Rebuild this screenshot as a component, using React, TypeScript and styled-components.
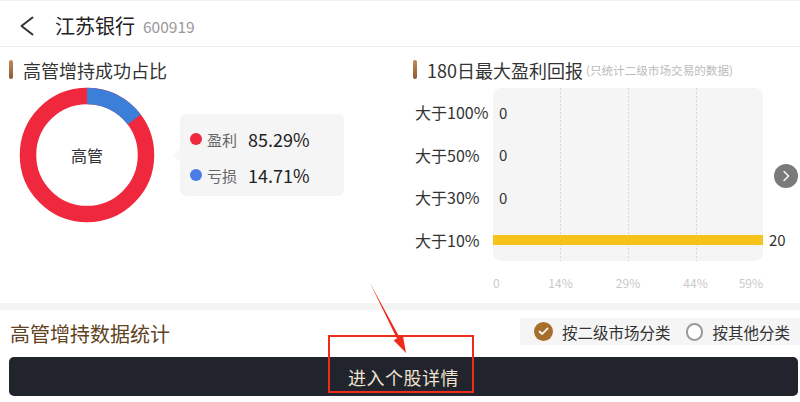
import React from "react";
import styled, { createGlobalStyle } from "styled-components";

const GlobalStyle = createGlobalStyle`
  html, body {
    margin: 0;
    padding: 0;
    background: #fff;
  }
  body {
    font-family: "Noto Sans CJK SC", "Noto Sans", sans-serif;
    color: #333;
  }
  * {
    box-sizing: border-box;
  }
`;

const Page = styled.div`
  position: relative;
  width: 800px;
  height: 402px;
  overflow: hidden;
  background: #fff;
`;

const Header = styled.header`
  height: 47px;
  display: flex;
  align-items: center;
  padding: 5px 0 0 20px;
  border-top: 1px solid #f2f2f2;
  border-bottom: 1px solid #ececec;
`;

const StockName = styled.span`
  margin-left: 21px;
  font-size: 20px;
  line-height: 24px;
  color: #222;
`;

const StockCode = styled.span`
  margin-left: 8px;
  font-size: 15.5px;
  line-height: 24px;
  color: #999;
`;

const Panels = styled.div`
  display: grid;
  grid-template-columns: 400px 400px;
  height: 256px;
`;

const Panel = styled.section<{ $left: number; $right?: number }>`
  padding: 13px ${(p) => p.$right ?? 0}px 0 ${(p) => p.$left}px;
`;

const TitleRow = styled.div`
  display: flex;
  align-items: center;
  height: 19px;
  gap: 10px;
`;

const TitleBar = styled.span`
  width: 4px;
  height: 19px;
  border-radius: 2px;
  background: linear-gradient(180deg, #c08a5c 0%, #8c5a36 100%);
`;

const Title = styled.h2`
  margin: 0;
  font-size: 18px;
  font-weight: 400;
  line-height: 22px;
  color: #333;
  white-space: nowrap;
`;

const Note = styled.span`
  margin-left: -7px;
  font-size: 11.6px;
  color: #bbb;
  white-space: nowrap;
`;

const DonutRow = styled.div`
  display: flex;
  align-items: center;
  margin-top: 8px;
  padding-left: 10px;
`;

const DonutBox = styled.div`
  position: relative;
  width: 136px;
  height: 136px;
  display: flex;
  align-items: center;
  justify-content: center;
  & svg {
    position: absolute;
    inset: 0;
  }
`;

const DonutLabel = styled.span`
  position: relative;
  font-size: 16px;
  color: #333;
`;

const Legend = styled.div`
  position: relative;
  margin-left: 25px;
  width: 164px;
  height: 82px;
  padding: 7px 0 3px 10px;
  border-radius: 6px;
  background: #f5f5f5;
  &::before {
    content: "";
    position: absolute;
    left: -7px;
    top: 34px;
    border-style: solid;
    border-width: 7px 7px 7px 0;
    border-color: transparent #f7f7f7 transparent transparent;
  }
`;

const LegendRow = styled.div`
  display: flex;
  align-items: center;
  height: 36px;
`;

const Dot = styled.span<{ $color: string }>`
  width: 12px;
  height: 12px;
  border-radius: 50%;
  background: ${(p) => p.$color};
  margin-right: 5px;
`;

const LegendName = styled.span`
  font-size: 15px;
  color: #666;
  margin-right: 11px;
`;

const LegendValue = styled.span`
  font-size: 18px;
  color: #222;
`;

const Chart = styled.div`
  display: grid;
  grid-template-columns: 78px 270px 1fr;
  grid-template-rows: 3px repeat(4, 42.5px);
  margin-top: 9px;
  margin-left: 2px;
`;

const PlotBg = styled.div`
  grid-column: 2;
  grid-row: 1 / -1;
  border-radius: 8px;
  background: #f5f5f5;
  overflow: hidden;
`;

const RowLabel = styled.span<{ $row: number }>`
  grid-column: 1;
  grid-row: ${(p) => p.$row};
  align-self: center;
  font-size: 16px;
  color: #333;
  white-space: nowrap;
`;

const BarRow = styled.div<{ $row: number; $empty: boolean }>`
  grid-column: 2 / 4;
  grid-row: ${(p) => p.$row};
  display: flex;
  align-items: center;
  gap: 6px;
  padding-left: ${(p) => (p.$empty ? 6 : 0)}px;
`;

const Bar = styled.span`
  height: 10px;
  background: #f7c31a;
`;

const BarValue = styled.span`
  font-size: 15px;
  color: #333;
`;

const NextButton = styled.span`
  grid-column: 3;
  grid-row: 1 / -1;
  justify-self: end;
  align-self: center;
  margin-top: 3px;
  width: 24px;
  height: 24px;
  border-radius: 50%;
  background: #7a7a7a;
  display: flex;
  align-items: center;
  justify-content: center;
`;

const Axis = styled.div`
  display: flex;
  justify-content: space-between;
  width: 270px;
  margin: 14px 0 0 80px;
  height: 16px;
`;

const Tick = styled.span<{ $align: string }>`
  width: 0;
  display: flex;
  justify-content: ${(p) => p.$align};
  font-size: 12px;
  line-height: 16px;
  color: #c9c9c9;
  white-space: nowrap;
`;

const Divider = styled.div`
  height: 7px;
  background: #f4f4f4;
`;

const Bottom = styled.section`
  padding-top: 8px;
`;

const StatsHeader = styled.div`
  display: flex;
  justify-content: space-between;
  align-items: flex-end;
  height: 27px;
`;

const StatsTitle = styled.h3`
  margin: 0 0 0 10px;
  font-size: 20px;
  font-weight: 400;
  line-height: 22px;
  color: #5f4322;
`;

const RadioGroup = styled.div`
  display: flex;
  align-items: center;
  width: 280px;
  height: 27px;
  padding: 0 10px 0 14px;
  background: #f5f5f5;
`;

const RadioText = styled.span`
  margin-left: 9px;
  font-size: 15.5px;
  color: #333;
  white-space: nowrap;
`;

const CheckedCircle = styled.span`
  width: 19px;
  height: 19px;
  border-radius: 50%;
  background: #a86f2c;
  display: flex;
  align-items: center;
  justify-content: center;
`;

const EmptyCircle = styled.span`
  margin-left: 15px;
  width: 18px;
  height: 18px;
  border-radius: 50%;
  border: 2px solid #9a9a9a;
  background: #fff;
`;

const DetailButton = styled.div`
  margin: 12px 2px 0 9px;
  height: 39px;
  border-radius: 5px;
  background: #21242c;
  display: flex;
  align-items: center;
  justify-content: center;
  font-size: 18px;
  color: #efe2d0;
  letter-spacing: 0.5px;
`;

const Annotation = styled.svg`
  position: absolute;
  left: 0;
  top: 0;
  pointer-events: none;
`;

const rows = [
  { label: "大于100%", value: 0 },
  { label: "大于50%", value: 0 },
  { label: "大于30%", value: 0 },
  { label: "大于10%", value: 20 },
];

const ticks = ["0", "14%", "29%", "44%", "59%"];

const R = 59;
const C = 2 * Math.PI * R;
const lossShare = 0.1471;

export default function App() {
  const max = 20;
  return (
    <Page>
      <GlobalStyle />
      <Header>
        <svg width="14" height="20" viewBox="0 0 14 20">
          <polyline points="12.5,1.5 1.5,10 12.5,18.5" fill="none" stroke="#333" strokeWidth="2" strokeLinecap="round" strokeLinejoin="round" />
        </svg>
        <StockName>江苏银行</StockName>
        <StockCode>600919</StockCode>
      </Header>

      <Panels>
        <Panel $left={9}>
          <TitleRow>
            <TitleBar />
            <Title>高管增持成功占比</Title>
          </TitleRow>
          <DonutRow>
            <DonutBox>
              <svg width="136" height="136" viewBox="0 0 136 136">
                <circle cx="68" cy="68" r={R} fill="none" stroke="#f0283e" strokeWidth="16.5" />
                <circle
                  cx="68"
                  cy="68"
                  r={R}
                  fill="none"
                  stroke="#3b7fd8"
                  strokeWidth="16.5"
                  strokeDasharray={`${C * lossShare} ${C}`}
                  transform="rotate(-90 68 68)"
                />
              </svg>
              <DonutLabel>高管</DonutLabel>
            </DonutBox>
            <Legend>
              <LegendRow>
                <Dot $color="#f0283e" />
                <LegendName>盈利</LegendName>
                <LegendValue>85.29%</LegendValue>
              </LegendRow>
              <LegendRow>
                <Dot $color="#4a7ee6" />
                <LegendName>亏损</LegendName>
                <LegendValue>14.71%</LegendValue>
              </LegendRow>
            </Legend>
          </DonutRow>
        </Panel>

        <Panel $left={13} $right={2}>
          <TitleRow>
            <TitleBar />
            <Title>180日最大盈利回报</Title>
            <Note>(只统计二级市场交易的数据)</Note>
          </TitleRow>
          <Chart>
            <PlotBg>
              <svg width="270" height="173">
                {[67, 135, 203].map((x) => (
                  <line key={x} x1={x + 0.5} y1="0" x2={x + 0.5} y2="173" stroke="#d6d6d6" strokeWidth="1" strokeDasharray="2 2" />
                ))}
              </svg>
            </PlotBg>
            {rows.map((r, i) => (
              <React.Fragment key={r.label}>
                <RowLabel $row={i + 2}>{r.label}</RowLabel>
                <BarRow $row={i + 2} $empty={!r.value}>
                  {r.value > 0 && <Bar style={{ width: `${(r.value / max) * 270}px` }} />}
                  <BarValue>{r.value}</BarValue>
                </BarRow>
              </React.Fragment>
            ))}
            <NextButton>
              <svg width="10" height="12" viewBox="0 0 10 12">
                <polyline points="3,1.5 7.5,6 3,10.5" fill="none" stroke="#fff" strokeWidth="1.4" strokeLinecap="round" strokeLinejoin="round" />
              </svg>
            </NextButton>
          </Chart>
          <Axis>
            {ticks.map((t, i) => (
              <Tick key={t} $align={i === 0 ? "flex-start" : i === ticks.length - 1 ? "flex-end" : "center"}>
                {t}
              </Tick>
            ))}
          </Axis>
        </Panel>
      </Panels>

      <Divider />

      <Bottom>
        <StatsHeader>
          <StatsTitle>高管增持数据统计</StatsTitle>
          <RadioGroup>
            <CheckedCircle>
              <svg width="11" height="9" viewBox="0 0 11 9">
                <polyline points="1.5,4.5 4.2,7 9.5,1.5" fill="none" stroke="#fff" strokeWidth="1.8" strokeLinecap="round" strokeLinejoin="round" />
              </svg>
            </CheckedCircle>
            <RadioText>按二级市场分类</RadioText>
            <EmptyCircle />
            <RadioText>按其他分类</RadioText>
          </RadioGroup>
        </StatsHeader>
        <DetailButton>进入个股详情</DetailButton>
      </Bottom>

      <Annotation width="800" height="402" viewBox="0 0 800 402">
        <rect x="329" y="336" width="144" height="56" fill="none" stroke="#ee2c1c" strokeWidth="2" />
        <polygon points="370,283 399.5,337.2 402.9,335.4 406,353 393.6,340.3 396.9,338.6" fill="#ee2c1c" />
      </Annotation>
    </Page>
  );
}
